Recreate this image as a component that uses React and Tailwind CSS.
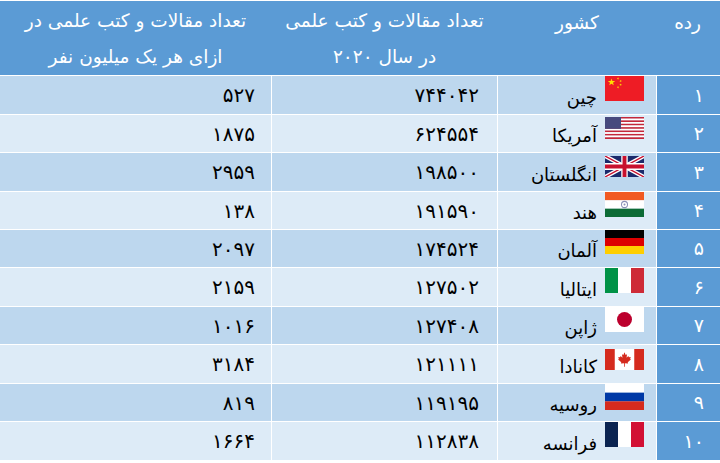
import React from "react";

const Star = ({ cx, cy, r, rot = 0 }) => {
  const pts = [];
  for (let i = 0; i < 10; i++) {
    const a = ((i * 36 - 90 + rot) * Math.PI) / 180;
    const rr = i % 2 === 0 ? r : r * 0.4;
    pts.push(`${cx + rr * Math.cos(a)},${cy + rr * Math.sin(a)}`);
  }
  return <polygon points={pts.join(" ")} fill="#ffde00" />;
};

const China = () => (
  <svg viewBox="0 0 30 20" preserveAspectRatio="none" className="w-full h-full">
    <rect width="30" height="20" fill="#ee1c25" />
    <Star cx={5} cy={5} r={3} />
    <Star cx={10} cy={2} r={1} rot={20} />
    <Star cx={12} cy={4} r={1} rot={40} />
    <Star cx={12} cy={7} r={1} rot={0} />
    <Star cx={10} cy={9} r={1} rot={20} />
  </svg>
);

const USA = () => (
  <svg viewBox="0 0 39 26" preserveAspectRatio="none" className="w-full h-full">
    {Array.from({ length: 13 }).map((_, i) => (
      <rect key={i} y={i * 2} width="39" height="2" fill={i % 2 === 0 ? "#c4283a" : "#ffffff"} />
    ))}
    <rect width="16" height="14" fill="#474a7e" />
  </svg>
);

const UK = () => (
  <svg viewBox="0 0 60 30" preserveAspectRatio="none" className="w-full h-full">
    <rect width="60" height="30" fill="#1b2a6b" />
    <path d="M0,0 L60,30 M60,0 L0,30" stroke="#fff" strokeWidth="6" />
    <path d="M0,0 L60,30 M60,0 L0,30" stroke="#c8102e" strokeWidth="2" />
    <path d="M30,0 V30 M0,15 H60" stroke="#fff" strokeWidth="10" />
    <path d="M30,0 V30 M0,15 H60" stroke="#c8102e" strokeWidth="6" />
  </svg>
);

const India = () => (
  <svg viewBox="0 0 39 24" preserveAspectRatio="none" className="w-full h-full">
    <rect width="39" height="8" fill="#f15a22" />
    <rect y="8" width="39" height="8" fill="#ffffff" />
    <rect y="16" width="39" height="8" fill="#0c6b36" />
    <circle cx="19.5" cy="12" r="3" fill="none" stroke="#8a8fb8" strokeWidth="1" />
    <circle cx="19.5" cy="12" r="1" fill="#8a8fb8" />
  </svg>
);

const Tri = ({ a, b, c, vertical }) => (
  <svg viewBox="0 0 30 30" preserveAspectRatio="none" className="w-full h-full">
    {vertical ? (
      <>
        <rect width="10" height="30" fill={a} />
        <rect x="10" width="10" height="30" fill={b} />
        <rect x="20" width="10" height="30" fill={c} />
      </>
    ) : (
      <>
        <rect width="30" height="10" fill={a} />
        <rect y="10" width="30" height="10" fill={b} />
        <rect y="20" width="30" height="10" fill={c} />
      </>
    )}
  </svg>
);

const Japan = () => (
  <svg viewBox="0 0 39 25" preserveAspectRatio="none" className="w-full h-full">
    <rect width="39" height="25" fill="#ffffff" />
    <circle cx="19.5" cy="12.5" r="7.5" fill="#bc002d" />
  </svg>
);

const Canada = () => (
  <svg viewBox="0 0 40 20" preserveAspectRatio="none" className="w-full h-full">
    <rect width="40" height="20" fill="#ffffff" />
    <rect width="10" height="20" fill="#d52b1e" />
    <rect x="30" width="10" height="20" fill="#d52b1e" />
    <path
      d="M20,3 L21.2,5.6 L22.6,4.9 L22.1,8.4 L24,6.6 L24.5,7.8 L26.4,7.5 L25.8,9.6 L26.6,10 L23.3,12.7 L23.7,13.9 L20.4,13.5 L20.4,17 L19.6,17 L19.6,13.5 L16.3,13.9 L16.7,12.7 L13.4,10 L14.2,9.6 L13.6,7.5 L15.5,7.8 L16,6.6 L17.9,8.4 L17.4,4.9 L18.8,5.6 Z"
      fill="#d52b1e"
    />
  </svg>
);

const rows = [
  { n: "۱", name: "چین", flag: <China />, h: "h-[25px]", mt: "mt-0", a: "۷۴۴۰۴۲", b: "۵۲۷" },
  { n: "۲", name: "آمریکا", flag: <USA />, h: "h-[22px]", mt: "mt-[2px]", a: "۶۲۴۵۵۴", b: "۱۸۷۵" },
  { n: "۳", name: "انگلستان", flag: <UK />, h: "h-[21px]", mt: "mt-[3px]", a: "۱۹۸۵۰۰", b: "۲۹۵۹" },
  { n: "۴", name: "هند", flag: <India />, h: "h-[25px]", mt: "mt-0", a: "۱۹۱۵۹۰", b: "۱۳۸" },
  { n: "۵", name: "آلمان", flag: <Tri a="#000000" b="#dd0000" c="#ffce00" />, h: "h-[24px]", mt: "mt-0", a: "۱۷۴۵۲۴", b: "۲۰۹۷" },
  { n: "۶", name: "ایتالیا", flag: <Tri vertical a="#009246" b="#ffffff" c="#ce2b37" />, h: "h-[25px]", mt: "mt-0", a: "۱۲۷۵۰۲", b: "۲۱۵۹" },
  { n: "۷", name: "ژاپن", flag: <Japan />, h: "h-[25px]", mt: "mt-0", a: "۱۲۷۴۰۸", b: "۱۰۱۶" },
  { n: "۸", name: "کانادا", flag: <Canada />, h: "h-[21px]", mt: "mt-[4px]", a: "۱۲۱۱۱۱", b: "۳۱۸۴" },
  { n: "۹", name: "روسیه", flag: <Tri a="#ffffff" b="#0039a6" c="#d52b1e" />, h: "h-[26px]", mt: "mt-0", a: "۱۱۹۱۹۵", b: "۸۱۹" },
  { n: "۱۰", name: "فرانسه", flag: <Tri vertical a="#0b2451" b="#ffffff" c="#d21034" />, h: "h-[25px]", mt: "mt-0", a: "۱۱۲۸۳۸", b: "۱۶۶۴" },
];

const heights = ["h-[38px]", "h-[37px]", "h-[38px]", "h-[37px]", "h-[37px]", "h-[38px]", "h-[37px]", "h-[38px]", "h-[37px]", "h-[38px]"];

const cols = "grid grid-cols-[63px_158px_225px_271px] gap-px";

export default function App() {
  return (
    <div
      dir="rtl"
      className="w-[720px] h-[463px] bg-white pt-px flex flex-col gap-px"
      style={{ fontFamily: '"DejaVu Sans", sans-serif' }}
    >
      <div className={`${cols} h-[74px] bg-[#5b9bd5] text-white text-[18.5px]`}>
        <div className="pr-[19px] pt-[8px]">رده</div>
        <div className="text-center pt-[8px]">کشور</div>
        <div className="flex flex-col items-center pt-[2px] leading-[36px] whitespace-nowrap">
          <span>تعداد مقالات و کتب علمی</span>
          <span>در سال ۲۰۲۰</span>
        </div>
        <div className="flex flex-col items-center pt-[2px] leading-[36px] whitespace-nowrap">
          <span>تعداد مقالات و کتب علمی در</span>
          <span>ازای هر یک میلیون نفر</span>
        </div>
      </div>
      {rows.map((r, i) => {
        const bg = i % 2 === 0 ? "bg-[#bdd7ee]" : "bg-[#ddebf7]";
        return (
          <div key={r.n} className={`${cols} ${heights[i]} text-[19px] text-black`}>
            <div className="bg-[#5b9bd5] text-white flex items-center pr-4">{r.n}</div>
            <div className={`${bg} flex items-start gap-2 pr-3`}>
              <div className={`w-[39px] ${r.h} ${r.mt} shrink-0`}>{r.flag}</div>
              <div className="self-center mt-1 text-[18px]">{r.name}</div>
            </div>
            <div className={`${bg} flex items-center pr-[18px] text-[20px]`}>{r.a}</div>
            <div className={`${bg} flex items-center pr-4 text-[20px]`}>{r.b}</div>
          </div>
        );
      })}
    </div>
  );
}
